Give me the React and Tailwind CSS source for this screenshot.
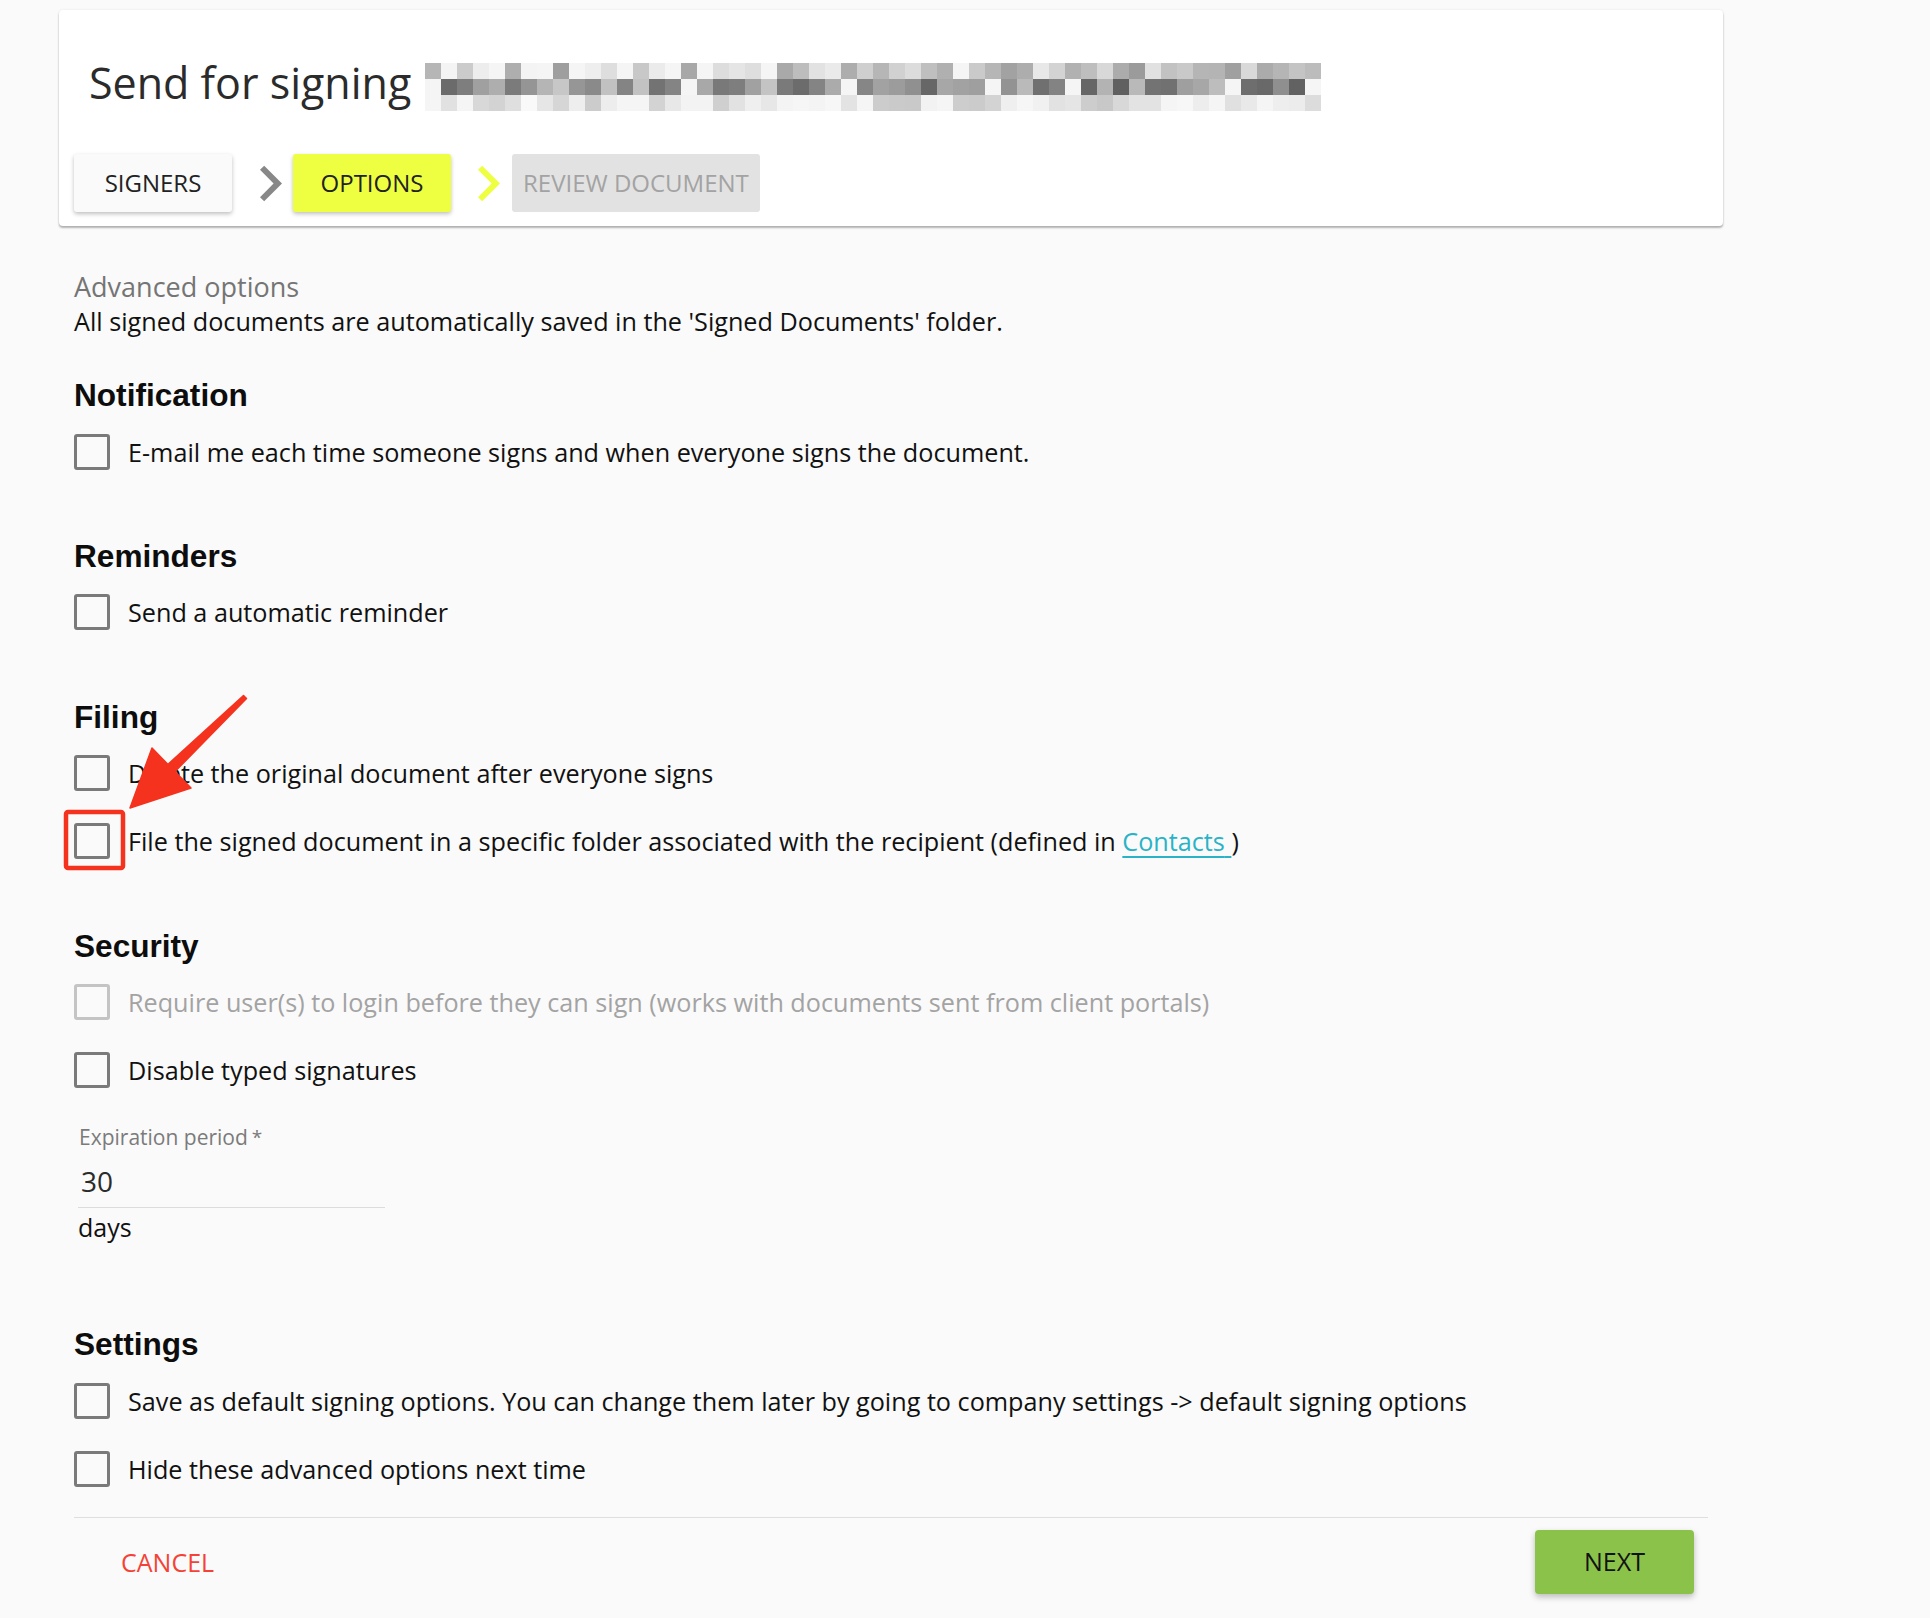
import React from "react";

function Pixelated() {
  const cols = 56;
  const rows = [
    { y: 0, base: 200, spread: 45 },
    { y: 16, base: 150, spread: 55 },
    { y: 32, base: 225, spread: 25 },
  ];
  let seed = 7;
  const rnd = () => {
    seed = (seed * 1103515245 + 12345) % 2147483648;
    return seed / 2147483648;
  };
  const rects = [];
  rows.forEach((r, ri) => {
    for (let c = 0; c < cols; c++) {
      const gap = rnd() < 0.12;
      let v = gap ? 245 : Math.round(r.base + (rnd() - 0.5) * 2 * r.spread);
      if (v > 250) v = 250;
      rects.push(
        <rect key={ri + "-" + c} x={c * 16} y={r.y + 4} width="16" height="16" fill={`rgb(${v},${v},${v})`} />
      );
    }
  });
  return (
    <svg width="896" height="60" viewBox="0 0 896 60" className="block">
      {rects}
    </svg>
  );
}

function Chevron({ color }) {
  return (
    <svg width="22" height="37" viewBox="8.59 6 7.41 12" className="block">
      <path d="M10 6L8.59 7.41 13.17 12l-4.58 4.59L10 18l6-6z" fill={color} />
    </svg>
  );
}

function Box({ disabled }) {
  return (
    <div
      className={
        "w-[36px] h-[36px] shrink-0 rounded-[3px] border-[3px] " +
        (disabled ? "border-[#c4c4c4]" : "border-[#7a7a7a]")
      }
    />
  );
}

function Row({ children, disabled, className = "" }) {
  return (
    <div className={"flex items-center h-[36px] " + className}>
      <Box disabled={disabled} />
      <div
        className={
          "ml-[18px] text-[25.2px] leading-[36px] whitespace-nowrap " +
          (disabled ? "text-[#a3a3a3]" : "text-[#111]")
        }
      >
        {children}
      </div>
    </div>
  );
}

function Heading({ children, className = "" }) {
  return (
    <div
      className={
        "text-[31.6px] leading-[40px] font-bold text-[#0d0d0d] " + className
      }
      style={{ fontFamily: '"Liberation Sans", Arial, sans-serif' }}
    >
      {children}
    </div>
  );
}

export default function App() {
  return (
    <div
      className="relative w-[1930px] min-h-[1618px] bg-[#fafafa] overflow-hidden"
      style={{ fontFamily: '"Open Sans", sans-serif' }}
    >
      <div className="ml-[59px] w-[1664px] pt-[10px]">
        {/* Header card */}
        <div className="bg-white rounded-[4px] h-[216px] shadow-[0_2px_2px_rgba(0,0,0,0.28),0_0_3px_rgba(0,0,0,0.08)] px-[15px] flex flex-col">
          <div className="flex items-start mt-[43px] h-[60px]">
            <div className="ml-[15px] text-[43px] leading-[60px] text-[#2b2b2b] whitespace-nowrap">
              Send for signing
            </div>
            <div className="ml-[14px] mt-[6px]">
              <Pixelated />
            </div>
          </div>
          <div className="flex items-center mt-[41px]">
            <div className="h-[58px] min-w-[158px] px-[11px] flex items-center justify-center rounded-[3px] bg-[#fafafa] text-[24px] text-[#222] shadow-[0_2px_4px_rgba(0,0,0,0.25)]">
              SIGNERS
            </div>
            <div className="ml-[28px] mr-[11px]">
              <Chevron color="#888888" />
            </div>
            <div className="h-[58px] min-w-[158px] px-[11px] flex items-center justify-center rounded-[3px] bg-[#eeff41] text-[24px] text-[#222] shadow-[0_2px_4px_rgba(0,0,0,0.25)]">
              OPTIONS
            </div>
            <div className="ml-[27px] mr-[12px]">
              <Chevron color="#eeff41" />
            </div>
            <div className="h-[58px] min-w-[158px] px-[11px] flex items-center justify-center rounded-[3px] bg-[#e2e2e2] text-[24px] text-[#a3a3a3]">
              REVIEW DOCUMENT
            </div>
          </div>
        </div>

        {/* Content */}
        <div className="px-[15px] flex flex-col">
          <div className="mt-[44px] text-[27px] leading-[34px] text-[#757575]">
            Advanced options
          </div>
          <div className="text-[25.2px] leading-[34px] text-[#111]">
            All signed documents are automatically saved in the 'Signed Documents' folder.
          </div>

          <Heading className="mt-[37px]">Notification</Heading>
          <Row className="mt-[19px]">
            E-mail me each time someone signs and when everyone signs the document.
          </Row>

          <Heading className="mt-[66px]">Reminders</Heading>
          <Row className="mt-[18px]">Send a automatic reminder</Row>

          <Heading className="mt-[67px]">Filing</Heading>
          <Row className="mt-[18px]">Delete the original document after everyone signs</Row>
          <Row className="mt-[32px]">
            File the signed document in a specific folder associated with the recipient (defined in{" "}
            <span className="text-[#2ab3c6] underline underline-offset-[5px] decoration-[2px]">
              Contacts{" "}
            </span>
            )
          </Row>

          <Heading className="mt-[67px]">Security</Heading>
          <Row className="mt-[18px]" disabled>
            Require user(s) to login before they can sign (works with documents sent from client portals)
          </Row>
          <Row className="mt-[32px]">Disable typed signatures</Row>

          <div className="ml-[4px] w-[307px] mt-[35px] flex flex-col">
            <div className="text-[21px] leading-[28px] text-[#7b7b7b] pl-[1px]">
              Expiration period<span className="ml-[4px] text-[19px] align-top">*</span>
            </div>
            <div className="h-[57px] pt-[13px] border-b border-[#dcdcdc] text-[28px] leading-[34px] text-[#2b2b2b] pl-[3px]">
              30
            </div>
            <div className="mt-[2px] text-[25px] leading-[34px] text-[#111]">days</div>
          </div>

          <Heading className="mt-[80px]">Settings</Heading>
          <Row className="mt-[19px]">
            Save as default signing options. You can change them later by going to company settings -&gt; default signing options
          </Row>
          <Row className="mt-[32px]">Hide these advanced options next time</Row>

          <div className="mt-[30px] h-px bg-[#dedede]" />

          <div className="mt-[12px] flex items-center justify-between">
            <div className="ml-[47px] text-[25px] leading-[62px] text-[#f44336]">CANCEL</div>
            <div className="mr-[14px] w-[159px] h-[64px] rounded-[4px] bg-[#8bc34a] flex items-center justify-center text-[25px] text-[#121212] shadow-[0_3px_6px_rgba(0,0,0,0.25)]">
              NEXT
            </div>
          </div>
        </div>
      </div>

      {/* Annotation overlay */}
      <svg
        className="absolute top-0 left-0 pointer-events-none"
        width="1930"
        height="1618"
        viewBox="0 0 1930 1618"
      >
        <rect x="66" y="812" width="57" height="56" rx="2" fill="none" stroke="#f4321e" strokeWidth="4.5" />
        <polygon
          points="243.5,695.5 168,764.4 152,748 130,808 191,788 175,771.6 246.5,698.5"
          fill="#f4321e"
          stroke="#f4321e"
          strokeWidth="1.5"
          strokeLinejoin="round"
        />
      </svg>
    </div>
  );
}
